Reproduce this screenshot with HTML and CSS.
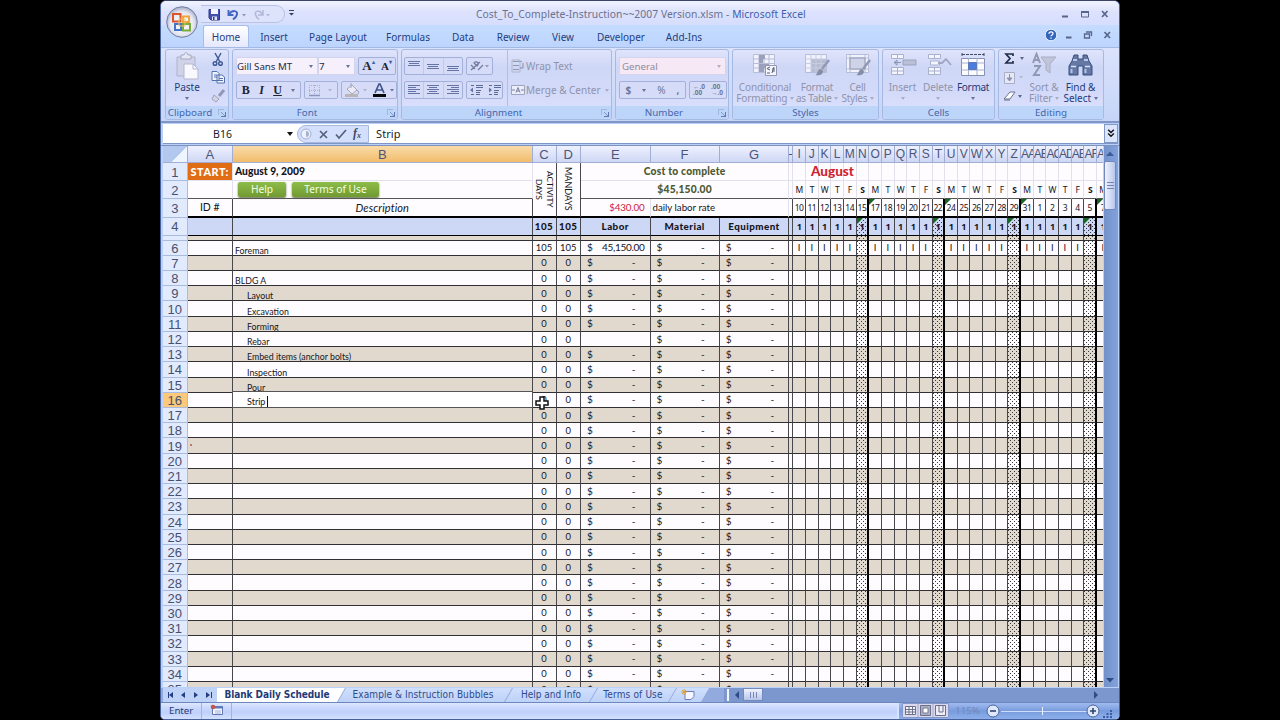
FILE: index.html
```html
<!DOCTYPE html>
<html lang="en">
<head>
<meta charset="utf-8">
<title>Cost_To_Complete - Microsoft Excel</title>
<link rel="stylesheet" href="styles.css">
</head>
<body>
<div class="window">
  <header class="top">
    <div class="titlebar">
      <div class="qat">
        <svg width="66" height="18" viewBox="0 0 66 18">
          <path d="M3 3.500h10.500v10.500H5l-2-2z" fill="#4650ae" stroke="#33398c"/><path d="M5 3h7v5H5z" fill="#f2f4ff"/><path d="M6 10.500h5v3.500H6z" fill="#dfe3fa"/><path d="M7 11h1.500v3H7z" fill="#33398c"/>
          <path d="M22.500 4v5h5" fill="none" stroke="#4666c4" stroke-width="2"/><path d="M23 8.500c3-5 9-4 8 0-.4 2-2 3.500-4 5" fill="none" stroke="#4666c4" stroke-width="2"/>
          <path d="M36 8h4l-2 2.500z" fill="#8b98bd"/>
          <path d="M57 4v5h-5" fill="none" stroke="#b1b8d6" stroke-width="1.500"/><path d="M56.500 8.500c-3-5-8-4-7 0 .4 2 1.500 3.500 3.500 5" fill="none" stroke="#b1b8d6" stroke-width="1.500"/>
          <path d="M60 8h4l-2 2.500z" fill="#b3bad5"/>
        </svg>
      </div>
      <svg class="qatmore" width="8" height="8" viewBox="0 0 8 8"><path d="M1 1.500h5" stroke="#333d5e"/><path d="M1 4h5L3.500 6.500z" fill="#333d5e"/></svg>
      <div class="title">Cost_To_Complete-Instruction~~2007 Version.xlsm - <b>Microsoft Excel</b></div>
      <svg class="winbtns" width="56" height="14" viewBox="0 0 56 14">
        <path d="M2 9.500h6" stroke="#59658a" stroke-width="2"/>
        <path d="M21.500 5h7v5h-7z" fill="none" stroke="#59658a"/><path d="M21 5h8" stroke="#59658a" stroke-width="2"/>
        <path d="M42 4l5.500 6M47.500 4L42 10" stroke="#59658a" stroke-width="1.700"/>
      </svg>
    </div>
    <nav class="tabs">
      <span class="tab on t1">Home</span><span class="tab t2">Insert</span><span class="tab t3">Page Layout</span><span class="tab t4">Formulas</span><span class="tab t5">Data</span><span class="tab t6">Review</span><span class="tab t7">View</span><span class="tab t8">Developer</span><span class="tab t9">Add-Ins</span>
      <svg class="docbtns" width="74" height="16" viewBox="0 0 74 16">
        <circle cx="7" cy="8" r="5.800" fill="#3566bd" stroke="#e4eeff"/><path d="M5 6.800c0-2.600 4-2.600 4-.3 0 1.500-2 1.400-2 2.800M7 10.500v1.300" stroke="#fff" stroke-width="1.300" fill="none"/>
        <path d="M22 10.500h5.500" stroke="#59658a" stroke-width="1.800"/>
        <path d="M40.500 7h5v4h-5zM42 5h5.500v4" fill="none" stroke="#59658a" stroke-width="1.300"/>
        <path d="M60.500 5l5.500 6M66 5l-5.500 6" stroke="#59658a" stroke-width="1.700"/>
      </svg>
    </nav>
    <svg class="orb" width="34" height="34" viewBox="0 0 34 34">
      <defs><radialGradient id="orbfill" cx=".5" cy=".55" r=".55"><stop offset="0" stop-color="#fff"/><stop offset=".7" stop-color="#e6e6f2"/><stop offset="1" stop-color="#9fa8c4"/></radialGradient></defs>
      <circle cx="17" cy="17" r="15.300" fill="url(#orbfill)" stroke="#737f9f"/>
      <g fill="none" stroke-width="2"><path d="M8 9h7.500v7.500H8z" stroke="#da552c"/><path d="M18 11.500h6v5.500h-6z" stroke="#f0a53a"/><path d="M10 19h6v6h-6z" stroke="#4175c8"/><path d="M18 19h7v6.500h-7z" stroke="#78ac3e"/><path d="M14 14h6v7h-6z" stroke="#f0c068" stroke-width="1"/></g>
    </svg>
  </header>

  <div class="ribbon">
    <section class="group g-clip">
      <div class="body">
        <div class="big paste">
          <svg width="26" height="30" viewBox="0 0 26 30"><path d="M3 5h18v19H3z" fill="#d0d2e8" stroke="#aeb2cc"/><path d="M7 3h3c0-3 4-3 4 0h3v4H7z" fill="#e7e7f4" stroke="#a4a8c4"/><path d="M10 12h9l5 5v10H10z" fill="#f8f8ff" stroke="#b4b8d0"/><path d="M19 12v5h5" fill="none" stroke="#b4b8d0"/></svg>
          <span>Paste</span><i class="dd"></i>
        </div>
        <svg class="clipcol" width="20" height="54" viewBox="0 0 20 54">
          <path d="M7 3l5 9M13 3L8 12" stroke="#435c98" stroke-width="1.500"/><circle cx="7" cy="13.500" r="1.800" fill="none" stroke="#435c98" stroke-width="1.500"/><circle cx="12.500" cy="13.500" r="1.800" fill="none" stroke="#435c98" stroke-width="1.500"/>
          <path d="M4 21.500h5l2 2v7H4zM9 25h5l2.500 2v6H9z" fill="#eef3ff" stroke="#5672ae"/><path d="M6 25h3M6 27h3M11 28.500h4M11 30.500h4" stroke="#5672ae"/>
          <path d="M16 40l-5 6" stroke="#9398b4" stroke-width="3"/><path d="M6 45l5 4-3 3-4-3z" fill="#d3d4e4" stroke="#9fa3bd"/>
        </svg>
      </div>
      <div class="cap"><span>Clipboard</span><i class="launch"></i></div>
    </section>

    <section class="group g-font">
      <div class="body stack">
        <div class="line">
          <div class="combo c1">Gill Sans MT<i class="dd"></i></div><div class="combo c2">7<i class="dd"></i></div>
          <div class="btns grow"><b class="serif big1">A<sup>▴</sup></b><b class="serif big2">A<sup>▾</sup></b></div>
        </div>
        <div class="line">
          <div class="btns biu"><b class="serif">B</b><b class="serif it">I</b><b class="serif un">U</b><i class="dd"></i></div>
          <div class="btns"><svg width="32" height="16" viewBox="0 0 32 16"><path d="M4 3.500h11M4 8.500h11M4.500 3v11M9.500 3v11M14.500 3v11" stroke="#a7b0ce" stroke-dasharray="1 1"/><path d="M4 13.500h11" stroke="#8b96bc" stroke-width="1.500"/><path d="M23 7h4l-2 2.500z" fill="#abb3ce"/></svg></div>
          <div class="btns"><svg width="54" height="16" viewBox="0 0 54 16"><path d="M5 7l5-4 5 5-5 4z" fill="#eceaf3" stroke="#a4a6ba"/><path d="M15 8c2 1 2 3 1 4M9 6V1" stroke="#a0a3b9" fill="none"/><path d="M3 12h13v3H3z" fill="#b9b5b6"/><path d="M21 7h4l-2 2.500z" fill="#abb3ce"/><path d="M31 12h13v3H31z" fill="#080808"/><path d="M33 11l4-9h1l4 9M35 8h5" stroke="#40558a" stroke-width="1.700" fill="none"/><path d="M48 7h4l-2 2.500z" fill="#66739c"/></svg></div>
        </div>
      </div>
      <div class="cap"><span>Font</span><i class="launch"></i></div>
    </section>

    <section class="group g-align">
      <div class="body cols">
        <div class="stack">
          <div class="line">
            <div class="btns"><svg width="57" height="16" viewBox="0 0 57 16"><g stroke="#6574a5"><path d="M3 3.500h12M4 5.500h10M3 7.500h12M22 6.500h12M23 8.500h10M22 10.500h12M42 8.500h12M43 10.500h10M42 12.500h12"/></g><path d="M18.500 0v16M38.500 0v16" stroke="#c1c9e8"/></svg></div>
            <div class="btns"><svg width="25" height="16" viewBox="0 0 25 16"><path d="M4 7l4 4M7 5c3-3 6 1 3 3zM4 12l9-8M11 12l5-5" stroke="#717b9d" stroke-width="1.200" fill="none"/><path d="M18 7h4l-2 2.500z" fill="#8e97b8"/></svg></div>
          </div>
          <div class="line">
            <div class="btns"><svg width="57" height="16" viewBox="0 0 57 16"><g stroke="#6574a5"><path d="M3 3.500h12M3 5.500h8M3 7.500h12M3 9.500h8M3 11.500h12M22 3.500h12M24 5.500h8M22 7.500h12M24 9.500h8M22 11.500h12M42 3.500h12M46 5.500h8M42 7.500h12M46 9.500h8M42 11.500h12"/></g><path d="M18.500 0v16M38.500 0v16" stroke="#c1c9e8"/></svg></div>
            <div class="btns"><svg width="35" height="16" viewBox="0 0 35 16"><path d="M4 3.500h3M9 3.500h7M9 5.500h7M9 8.500h5M9 10.500h4M4 12.500h3M9 12.500h4M22 3.500h3M27 3.500h7M27 5.500h7M27 8.500h5M27 10.500h4M22 12.500h3M27 12.500h4" stroke="#596895"/><path d="M6 5.500v5l-3-2.500zM22 5.500v5l3-2.500z" fill="#6574a5"/></svg></div>
          </div>
        </div>
        <div class="stack texts">
          <div class="line dim"><svg width="14" height="14" viewBox="0 0 14 14"><path d="M2 2.500h9M2 6.500h6M2 10.500h6" stroke="#9198b2"/><path d="M1 1v12h8V1z" fill="none" stroke="#b1b6ca"/><path d="M12 4v5H9" stroke="#858cad" fill="none"/></svg>Wrap Text</div>
          <div class="line dim mc"><svg width="14" height="14" viewBox="0 0 14 14"><path d="M.5 2.500h13v9H.5z" fill="#eceefd" stroke="#9da4be"/><path d="M1 7h3M10 7h3M5 9.500l2-5 2 5M6 8h2" stroke="#767e9b" fill="none"/></svg>Merge &amp; Center<i class="dd"></i></div>
        </div>
      </div>
      <div class="cap"><span>Alignment</span><i class="launch"></i></div>
    </section>

    <section class="group g-num">
      <div class="body stack">
        <div class="line"><div class="combo c3">General<i class="dd"></i></div></div>
        <div class="line">
          <div class="btns nums"><b>$</b><i class="dd"></i><span>%</span><b>,</b></div>
          <div class="btns dec"><span>←.0<br>.00</span><span>.00<br>→.0</span></div>
        </div>
      </div>
      <div class="cap"><span>Number</span><i class="launch"></i></div>
    </section>

    <section class="group g-styles">
      <div class="body">
        <div class="big dim b1"><svg width="26" height="26" viewBox="0 0 26 26"><path d="M1.500 2.500h21v18h-21z" fill="#f1f2fd" stroke="#b6bdd6"/><path d="M1.500 7h21M1.500 11.500h21M1.500 16h21M7 2v18M12 2v18M17 2v18" stroke="#b6bdd6"/><path d="M7 3h6v4H7zM7 12h10v4H7zM7 7h4v4H7zM7 16h5v4H7z" fill="#9ba1bd"/><path d="M13.500 13.500h11v10h-11z" fill="#f5f5fd" stroke="#9298b0"/><path d="M18 15l-3 1.500 3 1.500M15 21h3M20 17h3M20 19h3M22 15l-2 6" stroke="#555d75" fill="none"/></svg><span>Conditional<br>Formatting <i class="dd"></i></span></div>
        <div class="big dim b2"><svg width="26" height="26" viewBox="0 0 26 26"><path d="M1.500 2.500h21v18h-21z" fill="#f1f2fd" stroke="#b6bdd6"/><path d="M7 7h15v13H7z" fill="#b6bcd2"/><path d="M1.500 7h21M1.500 11.500h21M1.500 16h21M7 2v18M12 2v18M17 2v18" stroke="#c7cce0"/><path d="M25 8l-7 9" stroke="#9299b3" stroke-width="2.500"/><path d="M11 23c3 0 2-6 6-6l2 2c0 4-4 5-8 4z" fill="#858da8"/></svg><span>Format<br>as Table <i class="dd"></i></span></div>
        <div class="big dim b3"><svg width="26" height="26" viewBox="0 0 26 26"><path d="M1.500 2.500h22v18h-22z" fill="#f1f2fd" stroke="#b6bdd6"/><path d="M1.500 6h22M1.500 17h22M5 2v18M20 2v18" stroke="#b6bdd6"/><path d="M5 6h15v11H5z" fill="#ced3e8" stroke="#9299b3"/><path d="M25 8l-7 9" stroke="#9299b3" stroke-width="2.500"/><path d="M11 23c3 0 2-6 6-6l2 2c0 4-4 5-8 4z" fill="#858da8"/></svg><span>Cell<br>Styles <i class="dd"></i></span></div>
      </div>
      <div class="cap"><span>Styles</span></div>
    </section>

    <section class="group g-cells">
      <div class="body">
        <div class="big dim b4"><svg width="28" height="26" viewBox="0 0 28 26"><path d="M2.500 2.500h12v4h-12zM2.500 15.500h12v7h-12zM8.500 2v5M8.500 15v8M2 19h13" fill="#f5f5ff" stroke="#aab1cd"/><path d="M14 8h13v5H14z" fill="#bac0d6" stroke="#9ba2bf"/><path d="M12 10.500H5l3-2.500v5l-3-2.500" stroke="#8c94b3" fill="none"/></svg><span>Insert</span><i class="dd"></i></div>
        <div class="big dim b5"><svg width="28" height="26" viewBox="0 0 28 26"><path d="M4.500 2.500h12v4h-12zM4.500 15.500h12v7h-12zM10.500 2v5M10.500 15v8M4 19h13M6.500 9h9v4h-9z" fill="#f5f5ff" stroke="#aab1cd"/><path d="M14 11h4l4-4 5 6" fill="none" stroke="#a0a7c2" stroke-width="1.800"/></svg><span>Delete</span><i class="dd"></i></div>
        <div class="big b6"><svg width="28" height="26" viewBox="0 0 28 26"><path d="M3 1v3M25 1v3M3 2.500h22" stroke="#3e4965" stroke-dasharray="3 1"/><path d="M2.500 6.500h23v17h-23z" fill="#fcfcff" stroke="#8690b2"/><path d="M2.500 11h23M2.500 18h23M9.500 6v17M18 6v17" stroke="#a9b1cc"/><path d="M9.500 10.500h8v7h-8z" fill="#4a7ddf" stroke="#5e79b8"/></svg><span>Format</span><i class="dd"></i></div>
      </div>
      <div class="cap"><span>Cells</span></div>
    </section>

    <section class="group g-edit">
      <div class="body">
        <svg class="edcol" width="26" height="56" viewBox="0 0 26 56">
          <path d="M12 6V4H5l4 4.500-4 4.500h7v-2" fill="none" stroke="#1f2c4a" stroke-width="1.700"/><path d="M19 7h4l-2 3z" fill="#5b678e"/>
          <path d="M3.500 22.500h10v11h-10z" fill="#e6e8f6" stroke="#a9afc8"/><path d="M8.500 24v4M6 28h5l-2.500 3z" fill="#8b93af" stroke="#8b93af"/><path d="M18 26h4l-2 2.500z" fill="#b0b7cf"/>
          <path d="M3 49l6-7h5l-5 7z" fill="#fff" stroke="#69728d"/><path d="M3 50h6" stroke="#69728d"/><path d="M17 45h4l-2 3z" fill="#5b678e"/>
        </svg>
        <div class="big dim b7"><svg width="28" height="26" viewBox="0 0 28 26"><path d="M3 11l3.500-9L10 11M4 8h5M4 14h6l-6 9h6" stroke="#9198b3" stroke-width="2" fill="none"/><path d="M11 5h15l-6 7v9l-4-3v-6z" fill="#c1c5d9" stroke="#a8aec6"/></svg><span>Sort &amp;<br>Filter <i class="dd"></i></span></div>
        <div class="big b8"><svg width="28" height="26" viewBox="0 0 28 26"><path d="M7 3h4v4h5V3h4l2 6 3 5v9h-9v-9h-5v9H2v-9l3-5z" fill="#6578a4" stroke="#384e7d"/><path d="M4 14.500h5M18 14.500h5M6 8h4M17 8h4" stroke="#d7e2fa" stroke-width="1.500"/><path d="M4.500 17v4M18.500 17v4" stroke="#b5c5e8" stroke-width="2"/></svg><span>Find &amp;<br>Select <i class="dd"></i></span></div>
      </div>
      <div class="cap"><span>Editing</span></div>
    </section>
  </div>

  <div class="formula">
    <div class="name">B16</div><i class="dd blk"></i>
    <div class="fx"><svg width="70" height="18" viewBox="0 0 70 18"><circle cx="8" cy="8" r="5" fill="#edf0fd" stroke="#a1afd2"/><path d="M8 5a3 3 0 010 6z" fill="#a7b1cc"/><path d="M22 5l7 7M29 5l-7 7" stroke="#53617f" stroke-width="1.700"/><path d="M38 8.500l3 3.500 7-8" stroke="#53617f" stroke-width="1.700" fill="none"/></svg><em>f<sub>x</sub></em></div>
    <div class="value">Strip</div>
    <div class="expand"><svg width="12" height="17" viewBox="0 0 12 18"><path d="M3 5l3 3 3-3M3 9l3 3 3-3" fill="none" stroke="#111" stroke-width="1.500"/></svg></div>
  </div>

  <main class="work">
    <div class="sheet" id="sheet"></div>
    <div class="vscroll"><svg width="12" height="15" viewBox="0 0 12 15"><path d="M2 10h8L6 5.500z" fill="#3e5b99"/></svg><div class="vthumb"><i></i><i></i><i></i></div><svg class="down" width="12" height="15" viewBox="0 0 12 15"><path d="M2 6h8l-4 4.500z" fill="#2f4a85"/></svg></div>
  </main>

  <div class="sheets">
    <svg width="54" height="14" viewBox="0 0 54 14"><g fill="#243f80"><path d="M10 4L6 7l4 3zM22 4l-4 3 4 3zM31 4l4 3-4 3zM43 4l4 3-4 3z"/></g><path d="M5.500 4v6M48.500 4v6" stroke="#243f80"/></svg>
    <span class="st act s1">Blank Daily Schedule</span><span class="st s2">Example &amp; Instruction Bubbles</span><span class="st s3">Help and Info</span><span class="st s4">Terms of Use</span>
    <span class="st s5"><svg width="18" height="13" viewBox="0 0 18 13"><path d="M5 3.500h9v5l-3 3H5z" fill="#f5f6ff" stroke="#697eb2"/><path d="M4 1v6M1 4h6M2 2l4 4M6 2L2 6" stroke="#dfa33d"/></svg></span>
    <div class="hscroll"><i class="split"></i><svg width="13" height="14" viewBox="0 0 13 14"><path d="M9 3v8L5 7z" fill="#304a86"/></svg><div class="hthumb"><i></i><i></i><i></i></div><svg class="right" width="12" height="14" viewBox="0 0 12 14"><path d="M4 3v8l4-4z" fill="#304a86"/></svg></div>
  </div>

  <footer class="status">
    <span class="mode">Enter</span>
    <span class="macro"><svg width="14" height="12" viewBox="0 0 14 12"><path d="M2.500 2.500h10v8h-10z" fill="#f3f5ff" stroke="#6479ae"/><path d="M2 3.500h11" stroke="#5a78c2" stroke-width="2"/><path d="M5 7h6M5 9h6" stroke="#a3b2d9"/><circle cx="3" cy="3" r="2.300" fill="#c3554c"/></svg></span>
    <div class="zoombox">
      <svg class="views" width="47" height="15" viewBox="0 0 47 15"><path d="M.5.5h46v14H.5z" fill="#dcd9ee" stroke="#8497c8"/><path d="M16 1v13M31 1v13" stroke="#a0a9cd"/><path d="M3.500 3.500h10v8h-10zM3 6.500h11M3 9h11M7 3v9M10.500 3v9" fill="#f9f9ff" stroke="#6a6f8b"/><path d="M18.500 2.500h10v10h-10z" fill="#aeb0c4" stroke="#6a6f8b"/><path d="M21 5h5v5h-5z" fill="#fff" stroke="#777c95"/><path d="M33.500 2.500h10v10h-10z" fill="#ededf8" stroke="#6a6f8b"/><path d="M37 3v6h4V3" fill="none" stroke="#6a6f8b"/></svg>
      <span class="pct">115%</span>
      <svg width="128" height="16" viewBox="0 0 128 16"><path d="M16 8.500h86" stroke="#cedcfa"/><path d="M57.500 4v8" stroke="#e9f0ff"/><circle cx="8" cy="8" r="6" fill="#dfe7fb" stroke="#4d629a"/><path d="M5 8h6" stroke="#30456f" stroke-width="1.600"/><circle cx="108" cy="8" r="6" fill="#dfe7fb" stroke="#4d629a"/><path d="M105 8h6M108 5v6" stroke="#30456f" stroke-width="1.600"/><path d="M126 7v2M122.500 10v2M126 10v2M119 13v2M122.500 13v2M126 13v2" stroke="#3d5da3" stroke-width="2"/></svg>
    </div>
  </footer>
</div>
<script src="sheet.js"></script>
</body>
</html>
```
FILE: styles.css
```css
* { box-sizing: border-box; }
body { margin: 0; background: #000; overflow: hidden; font-family: "Noto Sans", "Open Sans", sans-serif; }
svg { display: block; flex: none; }
.window { position: relative; width: 960px; height: 720px; margin-left: 160px; display: flex; flex-direction: column; background: #b9d0f8; border: 1px solid #46609c; border-top-color: #3c4566; border-radius: 6px 6px 5px 5px; overflow: hidden; font-size: 10px; color: #1f3a78; }
.dd { display: inline-block; width: 0; height: 0; border: 2.500px solid transparent; border-top: 3px solid #66739c; border-bottom: 0; flex: none; }
.dim .dd { border-top-color: #a9aec6; }

.top { position: relative; height: 46px; flex: none; }
.titlebar { height: 24px; display: flex; align-items: center; background: linear-gradient(#f0f3ff, #dde2fd 45%, #d6defd); padding-left: 40px; }
.qat { width: 84px; height: 18px; border: 1px solid #b8c2e2; border-left: 0; border-radius: 0 9px 9px 0; padding-left: 5px; background: #dce3fb; margin-top: 1px; }
.qatmore { margin-left: 3px; }
.title { margin-left: 180px; width: 416px; margin-top: 2px; color: #6b7290; font-size: 10.300px; letter-spacing: .06px; white-space: nowrap; }
.title b { font-weight: 400; color: #3f5fae; }
.winbtns { margin: 1px 3px 0 auto; }
.tabs { height: 22px; display: flex; background: linear-gradient(#c5dcff, #bdd5fd); padding-left: 42px; color: #243e7e; }
.tab { height: 22px; line-height: 24px; text-align: center; font-size: 10px; white-space: nowrap; }
.tab.on { background: linear-gradient(#fff, #e5e8fd); border: 1px solid #a5bde9; border-bottom: 0; border-radius: 3px 3px 0 0; line-height: 22px; }
.t1 { width: 46px; } .t2 { width: 50px; } .t3 { width: 78px; } .t4 { width: 62px; } .t5 { width: 48px; } .t6 { width: 52px; } .t7 { width: 48px; } .t8 { width: 68px; } .t9 { width: 58px; }
.docbtns { margin: 2px 1px 0 auto; }
.orb { position: absolute; left: 4px; top: 4px; }

.ribbon { height: 76px; flex: none; display: flex; gap: 3px; padding: 1px 3px 3px 4px; background: linear-gradient(#dbe2fb, #c5d5f8); border-top: 1px solid #a4b9e4; border-bottom: 2px solid #8196c4; }
.group { height: 71px; flex: none; border: 1px solid #a6b9e2; border-radius: 3px; display: flex; flex-direction: column; background: linear-gradient(#e0e4fb, #cfd7f7 25%, #d3daf9 60%, #dde2fd); overflow: hidden; }
.g-clip { width: 64px; } .g-font { width: 166px; } .g-align { width: 211px; } .g-num { width: 114px; } .g-styles { width: 147px; } .g-cells { width: 113px; } .g-edit { width: 106px; }
.body { height: 57px; display: flex; }
.cap { height: 13px; background: #bed5fa; display: flex; align-items: center; justify-content: center; color: #4765ab; font-size: 9.800px; line-height: 12px; position: relative; }
.launch { position: absolute; right: 4px; top: 3px; width: 6px; height: 6px; border: 1px solid #a4b6dd; border-right: 0; border-bottom: 0; }
.launch::after { content: ""; position: absolute; left: 2px; top: 2px; width: 4px; height: 4px; border-right: 1px solid #6079b3; border-bottom: 1px solid #6079b3; background: linear-gradient(45deg, transparent 40%, #8496c4 41% 60%, transparent 61%); }
.g-clip .cap span { margin-right: 14px; }
.g-font .cap, .g-align .cap { padding-right: 16px; }
.g-num .cap { padding-right: 16px; }
.stack { display: flex; flex-direction: column; padding-top: 7px; gap: 6px; }
.line { display: flex; height: 18px; gap: 3px; align-items: center; }
.btns { display: flex; align-items: center; height: 18px; border: 1px solid #a3b1da; border-radius: 2px; background: #d6dcf8; }
.combo { height: 18px; background: #f6f0fc; border: 1px solid #d3d4ee; display: flex; align-items: center; justify-content: space-between; padding: 0 4px 0 2px; color: #252c44; font-size: 9.700px; white-space: nowrap; }
.c1 { width: 82px; padding-left: 0; } .c2 { width: 37px; margin-left: -3px; padding-left: 0; } .c3 { width: 107px; background: #f6e8f4; color: #8d8b9c; }
.c3 .dd { border-top-color: #b6abc4; }
.serif { font-family: "Liberation Serif", serif; font-size: 12px; color: #1c2436; }
.it { font-style: italic; } .un { text-decoration: underline; }
.grow { width: 38px; justify-content: space-around; }
.big1 { font-size: 13px; } .big2 { font-size: 11px; }
.grow sup { font-size: 6px; vertical-align: 6px; line-height: 0; color: #4060aa; }
.biu { width: 68px; justify-content: space-around; padding-left: 0; }
.g-font .stack { padding-left: 3px; }
.cols > .stack { padding-left: 2px; }
.cols .texts { margin-left: 4px; border-left: 1px solid #b4bfe0; padding-left: 3px; }
.dim { color: #8f93ab; }
.texts .line { font-size: 10px; white-space: nowrap; gap: 1px; }
.texts .mc { letter-spacing: 0; }
.mc .dd { margin-left: 3px; }
.g-num .stack { padding-left: 3px; }
.nums { width: 67px; justify-content: space-around; color: #6f7897; font-size: 10px; }
.dec { width: 38px; justify-content: space-around; font-size: 6.500px; line-height: 6px; color: #6d7795; font-weight: 700; }
.big { display: flex; flex-direction: column; align-items: center; text-align: center; font-size: 10px; line-height: 11px; white-space: nowrap; padding-top: 2px; letter-spacing: -.05px; }
.big svg { margin-bottom: 4px; }
.big .dd { vertical-align: 2px; }
.big > .dd { margin-top: 4px; }
.paste { width: 44px; } .paste svg { margin-bottom: 0; }
.b1 { width: 64px; letter-spacing: -.15px; } .b2 { width: 40px; letter-spacing: -.25px; } .b3 { width: 41px; letter-spacing: -.25px; }
.b4 { width: 39px; } .b5 { width: 32px; } .b6 { width: 38px; letter-spacing: -.3px; }
.edcol { margin-left: 2px; } .b7 { width: 34px; } .b8 { width: 39px; }

.formula { height: 20px; flex: none; display: flex; align-items: center; background: #fff; border-bottom: 1px solid #7e96c6; margin: 1px 1px 0 2px; color: #1b1b25; font-size: 10.500px; }
.name { width: 119px; text-align: center; }
.blk { border: 3px solid transparent; border-top: 4px solid #111; border-bottom: 0; margin-left: 5px; }
.fx { display: flex; width: 72px; height: 18px; margin-left: 4px; background: #d4e0fb; border-radius: 9px 0 0 9px; border: 1px solid #a7b8df; position: relative; }
.fx em { position: absolute; left: 55px; top: 0; font: italic bold 12px "Liberation Serif", serif; color: #3d4966; }
.fx sub { font-size: 8px; vertical-align: -1px; }
.value { padding-left: 7px; font-size: 11px; letter-spacing: .1px; }
.expand { margin-left: auto; background: #dbe5fb; border: 1px solid #8297c6; height: 19px; }

.work { height: 542px; flex: none; display: flex; margin-top: 1px; padding-left: 2px; border-top: 1px solid #7f92bd; overflow: hidden; }
.sheet { position: relative; width: 940px; height: 541px; overflow: hidden; display: grid; grid-template-columns: 24.500px 45.500px 299.500px 24px 24.500px 69.500px 69.200px 69.600px 4px repeat(25, 12.670px); grid-template-rows: 17px 18px 18px 18.500px 18.500px 4.600px repeat(30, 15.220px); font-family: Lato, "Gill Sans", sans-serif; font-size: 9.400px; color: #15151c; background: #fff; flex: none; }
.c { overflow: hidden; white-space: nowrap; border-right: 1px solid #48484c; border-bottom: 1px solid #303034; display: flex; align-items: center; justify-content: center; min-width: 0; line-height: 11px; background: #fefcff; }
.c.sh { background: #e1d9ce; }
.c.h4 { background: #cdd7f6; border-bottom: 1px solid #000; font-weight: 900; font-size: 9.800px; letter-spacing: .45px; }
.c.ch { font: 13px "Liberation Sans", sans-serif; color: #4b5579; background: linear-gradient(#eef1ff, #ced7f4); border-color: #a2aed1; }
.c.ch.narrow { font-size: 12px; }
.c.rh { font: 13px "Liberation Sans", sans-serif; color: #46516f; background: #e2eafe; border-color: #aabbe0; padding-top: 1px; }
.c.ch.hot { background: linear-gradient(#fadba9, #f2bd6c); }
.c.rh.hot { background: #fbc979; }
.c.wide { justify-content: flex-start; letter-spacing: -1px; }
.c.light { border-color: #e1e1ec; }
.c.r2 { border-bottom-color: #555; }
.c.r3 { border-bottom: 2px solid #000; }
.c.bt { justify-content: flex-start; align-items: flex-end; padding-left: 2px; font-size: 8.800px; line-height: 9px; }
.c.ind { padding-left: 14px; }
.c.money { justify-content: space-between; padding: 0 14px 0 6px; font-size: 10px; }
.c.money.full { padding-right: 5px; letter-spacing: -.3px; }
.c.sat { background-image: radial-gradient(circle at .5px .5px, #3a3a3a .5px, transparent .7px), radial-gradient(circle at 2.500px 2.500px, #3a3a3a .5px, transparent .7px); background-size: 4px 4px; }
.c.end { border-right: 2px solid #000; }
.c.tri { background-image: linear-gradient(135deg, #176523 4px, transparent 4.500px); }
.c.sat.tri { background-image: linear-gradient(135deg, #176523 4px, transparent 4.500px), radial-gradient(circle at .5px .5px, #3a3a3a .5px, transparent .7px), radial-gradient(circle at 2.500px 2.500px, #3a3a3a .5px, transparent .7px); background-size: auto, 4px 4px, 4px 4px; }
.c.day { font: 8.500px "Noto Sans", sans-serif; letter-spacing: -.5px; }
.c.day.h4 { font: 700 9px "Noto Sans", sans-serif; }
.c.bold { font-weight: 700; }
.c.start { background: #e06d14; color: #fff; font-weight: 900; font-size: 10.800px; letter-spacing: .6px; }
.c.date { justify-content: flex-start; padding-left: 2px; font-weight: 900; font-size: 10.300px; }
.vert { writing-mode: vertical-rl; line-height: 11px; font-size: 9px; }
.vert span { text-align: center; }
.c.vert.v1 { font-size: 8.400px; }
.c.total { color: #4d5930; font-weight: 900; font-size: 10.300px; letter-spacing: .2px; }
.c.rate { color: #cf2338; justify-content: flex-end; padding-right: 5px; font-size: 9.800px; letter-spacing: -.15px; }
.c.lab { justify-content: flex-start; padding-left: 2px; font-size: 9.700px; }
.desc { font-style: italic; font-size: 11px; letter-spacing: .1px; }
.id { font-size: 10.500px; }
.month { position: absolute; left: 648px; top: 18px; font-weight: 900; font-size: 13.500px; color: #d01f30; line-height: 15px; }
.pill { position: absolute; top: 36px; height: 15px; border-radius: 2px; background: linear-gradient(#8dbd49, #719a32); color: #f5ffe1; font: 10.200px/14px "Noto Sans", sans-serif; text-align: center; box-shadow: 0 1px 2px #5f6d48; }
.p1 { left: 75px; width: 48px; } .p2 { left: 129px; width: 87px; }
.edit { position: absolute; left: 69px; top: 245px; width: 301px; height: 17px; border: 1px solid #555; background: #fff; font-size: 9px; line-height: 19px; padding-left: 14px; }
.edit::after { content: ""; display: inline-block; width: 1px; height: 11px; background: #111; margin-left: 2px; vertical-align: -2px; }
.pointer { position: absolute; left: 371px; top: 249px; }
.speck { position: absolute; left: 27px; top: 298px; width: 2px; height: 2px; background: #b87c70; }
.c.corner { background: linear-gradient(135deg, #b2c8ef 60%, #eff5ff 61%); }

.vscroll { width: 14px; height: 541px; margin-left: 1px; background: linear-gradient(90deg, #7391ca, #84a2da); display: flex; flex-direction: column; flex: none; }
.vthumb { width: 12px; height: 49px; background: linear-gradient(90deg, #f0f2ff, #b9c6eb); border: 1px solid #7188bd; border-radius: 2px; display: flex; flex-direction: column; gap: 2px; align-items: center; justify-content: center; }
.vthumb i { width: 7px; height: 1px; background: #7185b5; }
.down { margin-top: auto; }

.sheets { height: 14px; flex: none; display: flex; background: #93aade; margin-top: 1px; padding-left: 2px; font: 10px "DejaVu Sans Condensed", "DejaVu Sans", sans-serif; color: #2e4a8b; }
.sheets > svg { background: #bfd3f8; }
.st { height: 14px; line-height: 14px; text-align: center; white-space: nowrap; background: linear-gradient(#cfdffd, #bed2f8); clip-path: polygon(8px 0, 100% 0, calc(100% - 8px) 100%, 0 100%); margin-left: -7px; }
.st.act { background: #fff; font-weight: 700; color: #1e3b79; clip-path: polygon(0 0, 100% 0, calc(100% - 8px) 100%, 0 100%); margin-left: 0; }
.s1 { width: 128px; padding-right: 8px; letter-spacing: -.08px; } .s2 { width: 174px; padding-right: 4px; letter-spacing: .07px; } .s3 { width: 92px; padding-right: 0; } .s4 { width: 86px; padding-right: 0; letter-spacing: .15px; } .s5 { width: 40px; padding-left: 11px; }
.hscroll { flex: 1; display: flex; margin-left: 15px; background: #7c97cd; }
.split { width: 4px; background: #f2f6ff; border: 1px solid #8098ca; margin-left: 2px; }
.hthumb { width: 20px; height: 13px; background: linear-gradient(#f0f2ff, #b8c5e9); border: 1px solid #7489bc; display: flex; gap: 2px; align-items: center; justify-content: center; }
.hthumb i { width: 1px; height: 6px; background: #7588b7; }
.right { margin-left: auto; margin-right: 17px; }

.status { flex: 1; display: flex; align-items: stretch; background: linear-gradient(#dfe7ff, #c7d6fc 35%, #bfd0fb 60%, #d4e1ff); border-top: 1px solid #6c87be; font-size: 9.700px; color: #273c70; }
.mode { width: 41px; padding-left: 8px; line-height: 15px; border-right: 1px solid #a0b4df; }
.macro { width: 30px; padding: 1px 0 0 8px; border-right: 1px solid #a0b4df; }
.zoombox { margin-left: auto; width: 222px; background: linear-gradient(#a0bbf1, #789bdc 50%, #8db0ec); border-left: 2px solid #d6e3ff; display: flex; align-items: flex-start; padding: 0 0 0 3px; }
.pct { color: #7088ba; width: 35px; text-align: center; line-height: 16px; margin-left: 1px; }
```
FILE: sheet.js
```js
const sheet = document.getElementById('sheet');
const names = 'I J K L M N O P Q R S T U V W X Y Z AA AB AC AD AE AF AG'.split(' ');
const dates = [10, 11, 12, 13, 14, 15, 17, 18, 19, 20, 21, 22, 24, 25, 26, 27, 28, 29, 31, 1, 2, 3, 4, 5, 7];
const letters = ['M', 'T', 'W', 'T', 'F', 'S'];
const tasks = { 6: 'Foreman', 8: 'BLDG A', 9: 'Layout', 10: 'Excavation', 11: 'Forming', 12: 'Rebar', 13: 'Embed items (anchor bolts)', 14: 'Inspection', 15: 'Pour' };
let html = '';

// row and col are 1-based spreadsheet positions; the heading strip is row 0, column 0
function cell(row, col, cls, text = '', cols = 1, rows = 1) {
  html += `<div class="c ${cls}" style="grid-area:${row + 1}/${col + 1}/span ${rows}/span ${cols}">${text}</div>`;
}

cell(0, 0, 'ch corner');
['A', 'B', 'C', 'D', 'E', 'F', 'G', 'H'].forEach((n, i) => cell(0, i + 1, n === 'B' ? 'ch hot' : 'ch', n));
names.forEach((n, i) => cell(0, i + 9, n.length > 1 ? 'ch narrow wide' : 'ch narrow', n));
for (let r = 1; r <= 35; r++) cell(r, 0, r === 16 ? 'rh hot' : 'rh', r === 5 ? '' : r);

cell(1, 1, 'light start', 'START:');
cell(1, 2, 'light date', 'August 9, 2009');
cell(2, 1, 'light r2');
cell(2, 2, 'light r2');
cell(3, 1, 'r3 id', 'ID #');
cell(3, 2, 'r3 desc', 'Description');
cell(1, 3, 'r3 vert v1', '<span>ACTIVITY<br>DAYS</span>', 1, 3);
cell(1, 4, 'r3 vert', '<span>MANDAYS</span>', 1, 3);
cell(1, 5, 'light total', 'Cost to complete', 3);
cell(2, 5, 'light r2 total', '$45,150.00', 3);
cell(3, 5, 'light r3 rate', '$430.00');
cell(3, 6, 'light r3 lab', 'daily labor rate', 2);
cell(1, 8, 'light'); cell(2, 8, 'light r2'); cell(3, 8, 'r3');
['', '', '105', '105', 'Labor', 'Material', 'Equipment', ''].forEach((t, i) => cell(4, i + 1, 'h4', t));

names.forEach((n, i) => {
  const sat = i % 6 === 5;
  const end = sat ? ' end' : '';
  const monday = i % 6 === 0 && i > 0;
  cell(1, i + 9, 'light');
  cell(2, i + 9, 'light r2 day' + (sat ? ' bold' : ''), letters[i % 6]);
  cell(3, i + 9, 'r3 day' + end + (monday ? ' tri' : ''), dates[i]);
  cell(4, i + 9, 'h4 day' + (sat ? ' sat tri end' : ''), '1');
});

for (let r = 5; r <= 35; r++) {
  const sh = r % 2 ? ' sh' : '';
  cell(r, 1, sh);
  cell(r, 2, 'bt' + sh + (r > 8 ? ' ind' : ''), tasks[r] || '');
  const n = r === 5 ? '' : r === 6 ? '105' : '0';
  cell(r, 3, sh, n);
  cell(r, 4, sh, n);
  for (let k = 5; k < 8; k++) {
    const blank = r === 5 || (r === 12 && k === 5);
    const full = r === 6 && k === 5;
    cell(r, k, 'money' + sh + (full ? ' full' : ''), blank ? '' : `<span>$</span><span>${full ? '45,150.00' : '-'}</span>`);
  }
  cell(r, 8, sh);
  names.forEach((_, i) => {
    const sat = i % 6 === 5;
    cell(r, i + 9, sh + (sat ? ' sat end' : ''), r === 6 && !sat ? 'I' : '');
  });
}

html += '<div class="month">August</div><div class="pill p1">Help</div><div class="pill p2">Terms of Use</div><div class="speck"></div>';
html += '<div class="edit">Strip</div><svg class="pointer" width="16" height="16" viewBox="0 0 16 16"><path d="M6 2h4v4h4v4h-4v4H6v-4H2V6h4z" fill="#fff" stroke="#111" stroke-width="1.500"/></svg>';
sheet.innerHTML = html;
```
